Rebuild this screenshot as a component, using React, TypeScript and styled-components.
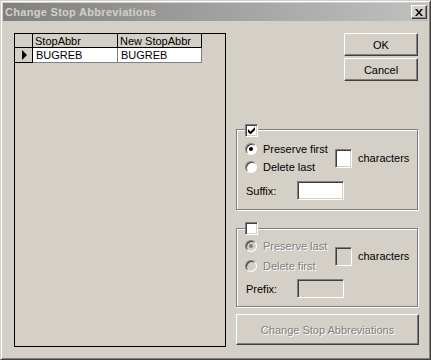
import styled, { createGlobalStyle } from 'styled-components';

const GlobalStyle = createGlobalStyle`
  html, body {
    margin: 0;
    padding: 0;
    background: #d4d0c8;
  }
  body {
    font-family: "Liberation Sans", Arial, sans-serif;
    font-size: 11px;
    color: #000;
  }
  * {
    box-sizing: border-box;
  }
`;

const Window = styled.div`
  width: 431px;
  height: 360px;
  display: flex;
  flex-direction: column;
  background: #d4d0c8;
  border: 1px solid;
  border-color: #d4d0c8 #404040 #404040 #d4d0c8;
  box-shadow: inset 1px 1px 0 #fff, inset -1px -1px 0 #808080;
  padding: 2px;
`;

const TitleBar = styled.div`
  height: 18px;
  display: flex;
  align-items: center;
  padding: 0 1px 0 2px;
  background: linear-gradient(to right, #808080, #c0c0c0);
`;

const Title = styled.span`
  font-weight: bold;
  font-size: 11px;
  color: #d4d0c8;
  letter-spacing: 0.3px;
`;

const CloseButton = styled.div`
  margin-left: auto;
  width: 16px;
  height: 14px;
  display: flex;
  align-items: center;
  justify-content: center;
  background: #d4d0c8;
  border: 1px solid;
  border-color: #fff #404040 #404040 #fff;
  box-shadow: inset -1px -1px 0 #808080;
`;

const Body = styled.div`
  flex: 1;
  display: flex;
  gap: 10px;
  padding: 12px 0 0 11px;
`;

const DataGrid = styled.div`
  width: 212px;
  height: 314px;
  border: 1px solid #000;
  background: #d4d0c8;
`;

const GridRow = styled.div`
  display: flex;
`;

const Cell = styled.div<{ $w: number; $h: number; $kind: 'head' | 'sel' | 'data' }>`
  width: ${(p) => p.$w}px;
  height: ${(p) => p.$h}px;
  display: flex;
  align-items: center;
  padding-left: ${(p) => (p.$kind === 'data' ? 3 : 2)}px;
  background: ${(p) => (p.$kind === 'data' ? '#fff' : '#d4d0c8')};
  border-right: 1px solid ${(p) => (p.$kind === 'data' ? '#808080' : '#000')};
  border-bottom: 1px solid ${(p) => (p.$kind === 'data' ? '#808080' : '#000')};
  white-space: nowrap;
  overflow: hidden;
`;

const RowMarker = styled.span`
  margin-left: 5px;
  width: 0;
  height: 0;
  border-left: 5px solid #000;
  border-top: 5px solid transparent;
  border-bottom: 5px solid transparent;
`;

const SideColumn = styled.div`
  width: 183px;
  display: flex;
  flex-direction: column;
`;

const ButtonStack = styled.div`
  align-self: flex-end;
  margin-right: 1px;
  display: flex;
  flex-direction: column;
  gap: 2px;
`;

const PushButton = styled.div<{ $w: number; $h: number; $top?: number; $disabled?: boolean }>`
  width: ${(p) => p.$w}px;
  height: ${(p) => p.$h}px;
  margin-top: ${(p) => p.$top ?? 0}px;
  display: flex;
  align-items: center;
  justify-content: center;
  background: #d4d0c8;
  border: 1px solid;
  border-color: #fff #404040 #404040 #fff;
  box-shadow: inset -1px -1px 0 #808080;
  color: ${(p) => (p.$disabled ? '#808080' : '#000')};
  text-shadow: ${(p) => (p.$disabled ? '1px 1px 0 #fff' : 'none')};
`;

const GroupBox = styled.div<{ $top: number; $pb: number }>`
  margin-top: ${(p) => p.$top}px;
  width: 182px;
  border: 1px solid #808080;
  box-shadow: 1px 1px 0 #fff, inset 1px 1px 0 #fff;
  padding: 0 0 ${(p) => p.$pb}px 8px;
`;

const CheckBox = styled.span<{ $lift: number }>`
  display: flex;
  align-items: center;
  justify-content: center;
  margin-top: -${(p) => p.$lift}px;
  width: 13px;
  height: 13px;
  background: #fff;
  border: 1px solid;
  border-color: #808080 #fff #fff #808080;
  box-shadow: inset 1px 1px 0 #404040, inset -1px -1px 0 #d4d0c8;
`;

const OptionsRow = styled.div<{ $top: number }>`
  margin-top: ${(p) => p.$top}px;
  display: flex;
  align-items: center;
`;

const RadioColumn = styled.div<{ $gap: number }>`
  width: 90px;
  display: flex;
  flex-direction: column;
  gap: ${(p) => p.$gap}px;
`;

const RadioRow = styled.div<{ $disabled?: boolean }>`
  height: 16px;
  display: flex;
  align-items: center;
  gap: 6px;
  color: ${(p) => (p.$disabled ? '#808080' : '#000')};
  text-shadow: ${(p) => (p.$disabled ? '1px 1px 0 #fff' : 'none')};
  white-space: nowrap;
`;

const RadioDot = styled.span<{ $checked?: boolean; $disabled?: boolean }>`
  position: relative;
  flex: none;
  width: 12px;
  height: 12px;
  border-radius: 50%;
  background: ${(p) => (p.$disabled ? '#d4d0c8' : '#fff')};
  border: 1px solid;
  border-color: #808080 #fff #fff #808080;
  box-shadow: inset 1px 1px 0 #404040;
  &::after {
    content: '';
    display: ${(p) => (p.$checked ? 'block' : 'none')};
    position: absolute;
    left: 3px;
    top: 3px;
    width: 4px;
    height: 4px;
    border-radius: 50%;
    background: ${(p) => (p.$disabled ? '#808080' : '#000')};
  }
`;

const SunkenBox = styled.span<{ $w: number; $h: number; $disabled?: boolean }>`
  flex: none;
  width: ${(p) => p.$w}px;
  height: ${(p) => p.$h}px;
  background: ${(p) => (p.$disabled ? '#d4d0c8' : '#fff')};
  border: 1px solid;
  border-color: #808080 #fff #fff #808080;
  box-shadow: inset 1px 1px 0 #404040, inset -1px -1px 0 #d4d0c8;
`;

const CharsLabel = styled.span`
  margin-left: 6px;
`;

const FieldRow = styled.div<{ $top: number }>`
  margin-top: ${(p) => p.$top}px;
  display: flex;
  align-items: center;
`;

const FieldLabel = styled.span`
  width: 52px;
  padding-left: 1px;
`;

const CheckMark = () => (
  <svg width="7" height="7" viewBox="0 0 7 7">
    <path d="M0 2v3l2 2h1l4-4V0L2.5 4.5z" fill="#000" />
  </svg>
);

const CloseGlyph = () => (
  <svg width="8" height="7" viewBox="0 0 8 7">
    <path d="M0 0h2l2 2.4 2-2.4h2L5 3.5 8 7H6L4 4.6 2 7H0l3-3.5z" fill="#000" />
  </svg>
);

type Group = {
  checked: boolean;
  disabled: boolean;
  first: string;
  second: string;
  field: string;
  top: number;
  lift: number;
  optionsTop: number;
  gap: number;
  fieldTop: number;
  pb: number;
};

const groups: Group[] = [
  {
    checked: true,
    disabled: false,
    first: 'Preserve first',
    second: 'Delete last',
    field: 'Suffix:',
    top: 48,
    lift: 6,
    optionsTop: 4,
    gap: 2,
    fieldTop: 6,
    pb: 9,
  },
  {
    checked: false,
    disabled: true,
    first: 'Preserve last',
    second: 'Delete first',
    field: 'Prefix:',
    top: 18,
    lift: 7,
    optionsTop: 3,
    gap: 4,
    fieldTop: 5,
    pb: 8,
  },
];

const App = () => {
  return (
    <>
      <GlobalStyle />
      <Window>
        <TitleBar>
          <Title>Change Stop Abbreviations</Title>
          <CloseButton>
            <CloseGlyph />
          </CloseButton>
        </TitleBar>
        <Body>
          <DataGrid>
            <GridRow>
              <Cell $w={18} $h={14} $kind="head" />
              <Cell $w={85} $h={14} $kind="head">StopAbbr</Cell>
              <Cell $w={84} $h={14} $kind="head">New StopAbbr</Cell>
            </GridRow>
            <GridRow>
              <Cell $w={18} $h={15} $kind="sel">
                <RowMarker />
              </Cell>
              <Cell $w={85} $h={15} $kind="data">BUGREB</Cell>
              <Cell $w={84} $h={15} $kind="data">BUGREB</Cell>
            </GridRow>
          </DataGrid>
          <SideColumn>
            <ButtonStack>
              <PushButton $w={74} $h={23}>OK</PushButton>
              <PushButton $w={74} $h={23}>Cancel</PushButton>
            </ButtonStack>
            {groups.map((g) => (
              <GroupBox key={g.field} $top={g.top} $pb={g.pb}>
                <CheckBox $lift={g.lift}>{g.checked && <CheckMark />}</CheckBox>
                <OptionsRow $top={g.optionsTop}>
                  <RadioColumn $gap={g.gap}>
                    <RadioRow $disabled={g.disabled}>
                      <RadioDot $checked $disabled={g.disabled} />
                      {g.first}
                    </RadioRow>
                    <RadioRow $disabled={g.disabled}>
                      <RadioDot $disabled={g.disabled} />
                      {g.second}
                    </RadioRow>
                  </RadioColumn>
                  <SunkenBox $w={17} $h={19} $disabled={g.disabled} />
                  <CharsLabel>characters</CharsLabel>
                </OptionsRow>
                <FieldRow $top={g.fieldTop}>
                  <FieldLabel>{g.field}</FieldLabel>
                  <SunkenBox $w={47} $h={19} $disabled={g.disabled} />
                </FieldRow>
              </GroupBox>
            ))}
            <PushButton $w={183} $h={31} $top={7} $disabled>
              Change Stop Abbreviations
            </PushButton>
          </SideColumn>
        </Body>
      </Window>
    </>
  );
};

export default App;
